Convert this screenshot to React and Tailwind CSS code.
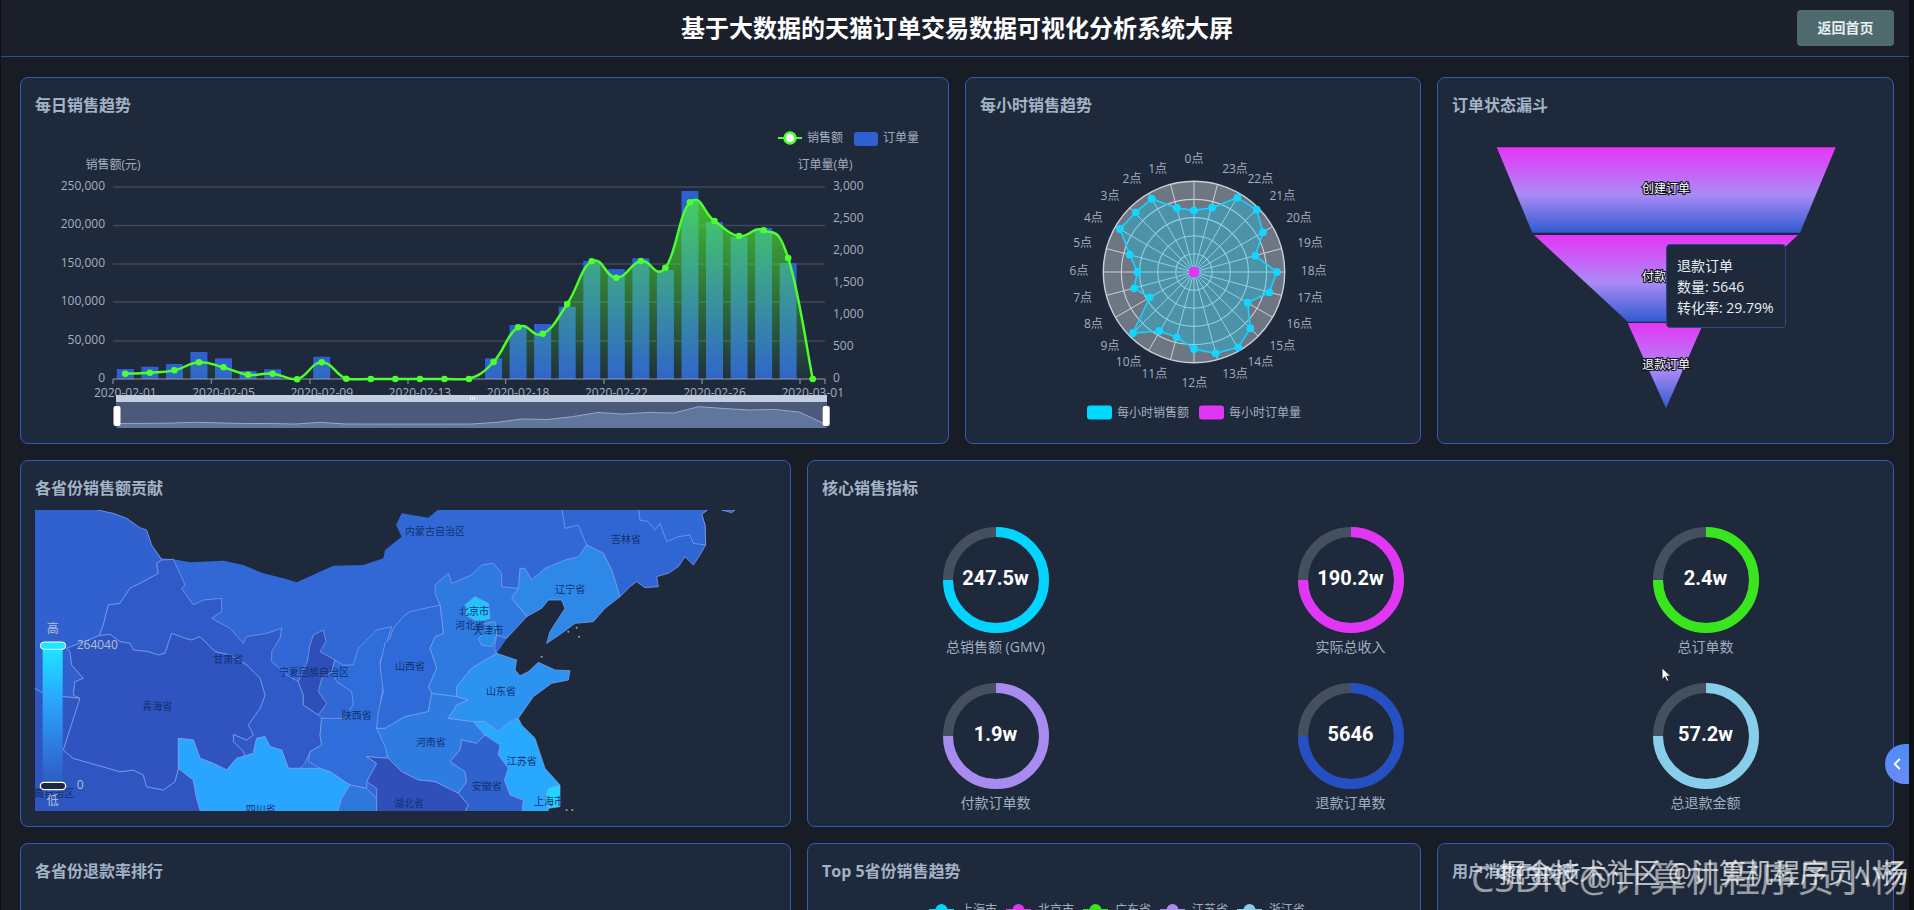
import React from "react";
import { ChevronLeft } from "lucide-react";

// daily chart numbers, read off the picture as pixel heights above the axis
const BASE_Y = 379;
const barHeights = [10, 12.3, 15, 27, 20.7, 8, 9.7, 0, 22.3, 0, 0, 0, 0, 0, 0, 20.7, 54, 55, 72.3, 118, 110, 120.7, 109, 188, 157, 142, 151, 116, 0];
const lineY = [373.7, 372.7, 370.3, 362.3, 367.3, 374.7, 373.7, 379.3, 362.3, 378.7, 379, 379, 379, 379, 379, 362, 327.3, 333.7, 304, 261.3, 277.7, 261, 267.7, 202.3, 221, 236, 230.3, 258, 379];
const dayX = (i) => 125.3 + i * 24.55;

const smoothPath = (pts) => {
  let d = `M${pts[0][0]} ${pts[0][1]}`;
  for (let i = 0; i < pts.length - 1; i++) {
    const p0 = pts[Math.max(i - 1, 0)];
    const p1 = pts[i];
    const p2 = pts[i + 1];
    const p3 = pts[Math.min(i + 2, pts.length - 1)];
    const t = 0.22;
    d += ` C${p1[0] + (p2[0] - p0[0]) * t} ${Math.min(p1[1] + (p2[1] - p0[1]) * t, 380)} ${p2[0] - (p3[0] - p1[0]) * t} ${Math.min(p2[1] - (p3[1] - p1[1]) * t, 380)} ${p2[0]} ${p2[1]}`;
  }
  return d;
};

function SalesChart() {
  const pts = lineY.map((y, i) => [dayX(i), y]);
  const line = smoothPath(pts);
  const mini = lineY.map((y, i) => [118 + (i * 707) / 28, 424 - (BASE_Y - y) * 0.098]);
  const miniLine = mini.map((p, i) => `${i ? "L" : "M"}${p[0]} ${p[1]}`).join(" ");
  const leftLabels = ["250,000", "200,000", "150,000", "100,000", "50,000", "0"];
  const rightLabels = ["3,000", "2,500", "2,000", "1,500", "1,000", "500", "0"];
  const gridY = [187, 225.5, 264, 302, 341];
  const dates = ["2020-02-01", "2020-02-05", "2020-02-09", "2020-02-13", "2020-02-18", "2020-02-22", "2020-02-26", "2020-03-01"];
  const ticks = [113, 211.3, 310, 408, 505.7, 604, 702, 800, 825];
  return (
    <svg viewBox="35 127 898 301" className="block h-[301px] w-full" fontSize="12" fill="#a3afc0">
      <defs>
        <linearGradient id="salesArea" gradientUnits="userSpaceOnUse" x1="0" y1="202" x2="0" y2="379">
          <stop offset="0" stopColor="#4fff30" stopOpacity="0.68" />
          <stop offset="1" stopColor="#4fff30" stopOpacity="0.04" />
        </linearGradient>
      </defs>
      <line x1="778" x2="802" y1="138" y2="138" stroke="#4dff2e" strokeWidth="2" />
      <circle cx="790" cy="138" r="5.5" fill="#fff" stroke="#4dff2e" strokeWidth="2.5" />
      <text x="807" y="142">销售额</text>
      <rect x="854" y="132" width="24" height="14" rx="3" fill="#2f5fd0" />
      <text x="883" y="142">订单量</text>
      <text x="113" y="169" textAnchor="middle">销售额(元)</text>
      <text x="825" y="169" textAnchor="middle">订单量(单)</text>
      {gridY.map((y) => (
        <line key={y} x1="113" x2="825" y1={y} y2={y} stroke="#3f4859" strokeWidth="1.3" />
      ))}
      {leftLabels.map((t, i) => (
        <text key={t} x="105" y={190 + i * 38.4} textAnchor="end">{t}</text>
      ))}
      {rightLabels.map((t, i) => (
        <text key={t} x="833" y={190 + i * 32} >{t}</text>
      ))}
      {barHeights.map((h, i) => (
        <rect key={i} x={dayX(i) - 8.5} y={BASE_Y - h} width="17" height={h} fill="#2f5fd0" />
      ))}
      <path d={`${line} L${dayX(28)} ${BASE_Y} L${dayX(0)} ${BASE_Y} Z`} fill="url(#salesArea)" />
      <line x1="113" x2="825" y1="379" y2="379" stroke="#929cab" strokeWidth="1.2" />
      {ticks.map((x) => (
        <line key={x} x1={x} x2={x} y1="379" y2="384" stroke="#929cab" strokeWidth="1" />
      ))}
      {dates.map((d, i) => (
        <text key={d} x={dayX(i * 4)} y="396.5" textAnchor="middle">{d}</text>
      ))}
      <path d={line} fill="none" stroke="#4dff2e" strokeWidth="2.4" />
      {pts.map((p, i) => (
        <circle key={i} cx={p[0]} cy={p[1]} r="3.3" fill="#4dff2e" />
      ))}
      <rect x="116" y="395" width="711" height="7" fill="#c3cfe0" />
      <rect x="116" y="402" width="711" height="26" fill="#4a5a78" />
      <path d={`${miniLine} L825 428 L118 428 Z`} fill="#62769c" />
      <path d={miniLine} fill="none" stroke="#92a8cc" strokeWidth="1" />
      <path d="M470.5 396.5v3.5M472.5 396.5v3.5M474.5 396.5v3.5" stroke="#fff" strokeWidth="0.8" />
      <rect x="113.5" y="406" width="7" height="20" rx="2" fill="#fff" />
      <rect x="822.7" y="406" width="7" height="20" rx="2" fill="#fff" />
    </svg>
  );
}

// radar points and label centres in page coordinates
const radarZoom = [[402, 211], [351, 204], [275, 176], [227, 217], [180, 267], [209, 344], [232, 396], [222, 445], [269, 472], [219, 579], [298, 573], [350, 592], [402, 627], [467, 640], [535, 622], [571, 565], [563, 488], [628, 457], [651, 396], [586, 347], [609, 277], [590, 209], [532, 173], [456, 203]];
const radarLabels = [[402, 57], [293, 88], [216, 118], [150, 168], [100, 235], [68, 310], [57, 394], [68, 475], [100, 551], [150, 617], [206, 667], [283, 701], [403, 730], [525, 701], [601, 667], [667, 617], [718, 551], [750, 475], [761, 394], [750, 310], [717, 235], [667, 168], [601, 118], [525, 88]];
const toPage = ([x, y]) => [1060 + x / 3, 140 + y / 3];

function HourRadar() {
  const cx = 1194;
  const cy = 272;
  const pts = radarZoom.map(toPage);
  return (
    <svg viewBox="980 127 425 301" className="block h-[301px] w-full" fontSize="12" fill="#a3afc0">
      <circle cx={cx} cy={cy} r="90.7" fill="#6e7683" />
      {[18.2, 36.3, 54.4, 72.6, 90.7].map((r, i) => (
        <circle key={r} cx={cx} cy={cy} r={r} fill="none" stroke="#c8d0da" strokeWidth={i === 4 ? 1.4 : 1.1} />
      ))}
      {Array.from({ length: 24 }, (_, i) => {
        const a = (i * Math.PI) / 12;
        return <line key={i} x1={cx} y1={cy} x2={cx + Math.sin(a) * 90.7} y2={cy - Math.cos(a) * 90.7} stroke="#c8d0da" strokeWidth="1" />;
      })}
      <polygon points={pts.map((p) => p.join(",")).join(" ")} fill="#00d4ff" fillOpacity="0.3" stroke="#19d3ff" strokeWidth="1.6" />
      {pts.map((p, i) => (
        <circle key={i} cx={p[0]} cy={p[1]} r="3.9" fill="#12d6ff" />
      ))}
      <circle cx={cx} cy={cy} r="5.5" fill="#e136f5" />
      {radarLabels.map((l, i) => {
        const p = toPage(l);
        return <text key={i} x={p[0]} y={p[1] + 4} textAnchor="middle">{i}点</text>;
      })}
      <rect x="1087" y="405.5" width="25" height="14" rx="3" fill="#00d9ff" />
      <text x="1117" y="416.5">每小时销售额</text>
      <rect x="1199" y="405.5" width="25" height="14" rx="3" fill="#e136f5" />
      <text x="1229" y="416.5">每小时订单量</text>
    </svg>
  );
}

function OrderFunnel() {
  const labelProps = { textAnchor: "middle", fontSize: 12, fill: "#fff", stroke: "#0d1220", strokeWidth: 2.2, paintOrder: "stroke" };
  return (
    <svg viewBox="1452 127 426 301" className="block h-[301px] w-full">
      <defs>
        <linearGradient id="funnelFill" x1="0" y1="0" x2="0" y2="1">
          <stop offset="0" stopColor="#e535f7" />
          <stop offset="0.55" stopColor="#ab8af6" />
          <stop offset="1" stopColor="#2f5bcf" />
        </linearGradient>
      </defs>
      <polygon points="1496.7,147.3 1835.7,147.3 1800,232.7 1532.3,232.7" fill="url(#funnelFill)" />
      <polygon points="1534,235 1798,235 1704,321.7 1627.7,321.7" fill="url(#funnelFill)" />
      <polygon points="1627.7,323 1703.5,323 1666,408.3" fill="url(#funnelFill)" />
      <text x="1666" y="193" {...labelProps}>创建订单</text>
      <text x="1666" y="281" {...labelProps}>付款订单</text>
      <text x="1666" y="369" {...labelProps}>退款订单</text>
    </svg>
  );
}

const land = "5,5 155,5 250,25 290,40 330,68 350,75 365,120 395,160 430,163 480,172 580,167 640,180 700,205 760,220 800,232 860,205 910,182 1000,180 1060,160 1065,135 1115,95 1098,60 1115,25 1195,38 1235,5 1700,5 1700,125 1500,300 1400,445 1320,650 1300,930 5,930";
const provinces = [
  ["#3061cf", "5,5 155,5 250,25 290,40 330,68 350,75 365,120 395,165 380,175 385,205 340,230 300,250 270,295 235,300 220,360 208,392 110,430 120,440 125,480 160,520 135,530 130,570 150,580 100,575 40,565 5,545"],
  ["#2f55c1", "5,545 40,565 100,575 150,580 100,735 130,760 200,780 270,800 310,795 340,810 350,845 400,855 435,830 445,790 490,825 500,880 515,930 5,930"],
  ["#2f5ac8", "430,163 395,165 380,175 385,205 340,230 300,250 270,295 235,300 220,360 208,392 240,388 270,410 300,415 310,435 355,440 385,450 405,445 425,385 465,400 485,405 510,395 555,440 600,450 650,480 690,520 705,570 690,610 655,660 670,690 650,705 610,688 610,710 640,740 645,755 670,745 680,700 705,695 720,725 755,735 775,790 810,790 825,775 840,740 875,720 870,690 875,640 865,630 820,600 820,570 805,530 770,510 725,470 725,440 750,400 755,370 710,385 650,395 640,415 600,370 545,340 575,320 575,280 520,285 490,300 455,250 465,240"],
  ["#2f53bf", "208,392 240,388 270,410 300,415 310,435 355,440 385,450 405,445 425,385 465,400 485,405 510,395 555,440 600,450 650,480 690,520 705,570 690,610 655,660 670,690 650,705 610,688 610,710 640,740 645,755 620,760 590,795 550,775 510,760 490,705 445,700 445,790 435,830 400,855 350,845 340,810 310,795 270,800 200,780 130,760 100,735 150,580 130,570 135,530 160,520 125,480 120,440 110,430"],
  ["#2e4fb7", "840,420 850,390 880,375 888,410 870,440 915,465 905,500 875,520 865,560 890,595 865,630 820,600 820,570 805,530 832,470"],
  ["#2f6dda", "915,465 940,480 970,480 985,430 1040,375 1085,365 1065,430 1050,470 1060,540 1040,670 1080,740 1065,760 1010,755 1040,775 1010,830 1010,850 960,840 900,800 870,790 835,770 840,740 875,720 870,690 875,640 940,640 970,600 965,560 920,530 905,500"],
  ["#29a4ff", "445,700 490,705 510,760 550,775 590,795 620,760 670,745 680,700 705,695 720,725 755,735 775,790 810,790 870,790 900,800 960,840 935,880 920,930 515,930 500,880 490,825 445,790 445,740"],
  ["#2e78dc", "960,840 1010,850 1040,880 1040,930 920,930 935,880"],
];
const eastProvinces = [
  ["#2f66d4", "530,5 540,70 580,60 605,120 655,145 680,195 705,275 735,245 755,230 780,248 820,245 815,215 850,205 880,185 900,155 925,180 945,150 962,120 960,60 950,28 980,5"],
  ["#3068d6", "760,5 765,45 790,50 810,75 825,55 845,110 880,95 915,90 925,115 962,120 960,60 950,28 980,5"],
  ["#2e88e8", "605,120 655,145 680,195 705,275 660,310 625,350 570,355 530,385 485,415 495,380 540,310 530,285 490,285 470,310 425,335 415,320 380,280 400,250 405,190 420,190 440,225 480,190 540,165 580,155"],
  ["#2f7ae0", "150,240 190,205 200,235 260,210 290,180 325,175 350,205 350,245 400,250 380,280 425,335 365,400 335,390 328,430 335,445 260,490 215,545 215,575 140,565 130,545 155,490 135,430 150,395 175,385 165,300 150,265"],
  ["#22c4ff", "270,275 310,295 315,340 280,350 240,330 240,300"],
  ["#2a8de8", "300,355 330,350 335,390 320,425 290,420 280,400 300,385"],
  ["#2e6bd8", "165,300 175,385 150,395 135,430 155,490 130,545 140,565 130,620 60,635 0,670 -25,670 -20,620 -5,560 -15,480 0,415 15,400 25,370 60,330 75,320 120,310"],
  ["#2e7ce2", "-25,670 0,670 60,635 130,620 140,565 215,575 250,585 215,600 190,640 265,650 300,690 275,715 230,705 225,735 195,770 240,800 245,830 220,865 150,830 100,825 50,800 10,760 0,725"],
  ["#2c93f0", "335,445 395,465 390,495 405,512 430,500 460,472 510,495 555,497 550,525 500,535 445,575 400,640 375,650 340,680 300,650 265,650 190,640 215,600 250,585 215,575 215,545 260,490"],
  ["#28a8ff", "265,650 300,650 340,680 375,650 400,640 410,660 450,700 480,790 525,840 490,850 490,930 410,930 415,885 375,870 358,825 370,790 340,750 345,720 300,690"],
  ["#1fd6ff", "490,850 525,840 525,905 490,910 480,880"],
  ["#2f62cc", "275,715 300,690 345,720 340,750 370,790 358,825 375,870 415,885 410,930 235,930 250,900 220,865 245,830 240,800 195,770 225,735 230,705"],
  ["#304fbb", "10,760 50,800 100,825 150,830 220,865 250,900 235,930 -25,930 -25,850 -55,830 -25,775 -55,755"],
  ["#2f66d4", "1010,15 1050,15 1040,23"],
];
const islands = [[550, 380], [575, 368], [582, 395], [470, 455], [545, 915], [562, 915]];
const westLabels = [["甘肃省", 595, 463], ["青海省", 382, 603], ["宁夏回族自治区", 852, 503], ["陕西省", 980, 630], ["四川省", 692, 912], ["西藏自治区", 58, 865]];
const eastLabels = [["内蒙古自治区", 150, 78], ["吉林省", 723, 103], ["辽宁省", 556, 252], ["北京市", 267, 320], ["河北省", 255, 360], ["天津市", 310, 377], ["山西省", 75, 483], ["山东省", 348, 560], ["河南省", 137, 712], ["江苏省", 410, 770], ["安徽省", 305, 843], ["湖北省", 72, 895], ["上海市", 492, 888]];

function ProvinceMap() {
  return (
    <svg viewBox="15 15 2160 903" className="block h-[301px] w-[720px]">
      <defs>
        <linearGradient id="legendBar" x1="0" y1="0" x2="0" y2="1">
          <stop offset="0" stopColor="#1ee8ff" />
          <stop offset="0.4" stopColor="#29a6ff" />
          <stop offset="1" stopColor="#2f5cc4" />
        </linearGradient>
      </defs>
      <polygon points={land} fill="#3268d6" />
      <g stroke="#7fa2ea" strokeWidth="2.2" strokeLinejoin="round">
        {provinces.map(([fill, points], i) => (
          <polygon key={i} points={points} fill={fill} />
        ))}
        <g transform="translate(1065 0)">
          {eastProvinces.map(([fill, points], i) => (
            <polygon key={i} points={points} fill={fill} />
          ))}
        </g>
      </g>
      <g transform="translate(1065 0)" fill="#b79f86">
        {islands.map(([x, y]) => (
          <circle key={x} cx={x} cy={y} r="3" />
        ))}
      </g>
      <g fontSize="30" fill="#12306e" textAnchor="middle">
        {westLabels.map(([t, x, y]) => (
          <text key={t} x={x} y={y + 11}>{t}</text>
        ))}
        <g transform="translate(1065 0)">
          {eastLabels.map(([t, x, y]) => (
            <text key={t} x={x} y={y + 11}>{t}</text>
          ))}
        </g>
      </g>
      <rect x="38" y="420" width="60" height="410" fill="url(#legendBar)" />
      <rect x="31" y="411" width="76" height="22" rx="11" fill="#1ee8ff" stroke="#fff" strokeWidth="3" />
      <rect x="31" y="832" width="76" height="22" rx="11" fill="#1e293b" stroke="#fff" strokeWidth="4" />
      <g fontSize="36" fill="#b3c0d4">
        <text x="68" y="383" textAnchor="middle">高</text>
        <text x="68" y="900" textAnchor="middle">低</text>
        <text x="140" y="433">264040</text>
        <text x="140" y="853">0</text>
      </g>
    </svg>
  );
}

const metrics = [
  { value: "247.5w", label: "总销售额 (GMV)", color: "#00d4ff" },
  { value: "190.2w", label: "实际总收入", color: "#e136f5" },
  { value: "2.4w", label: "总订单数", color: "#39e61e" },
  { value: "1.9w", label: "付款订单数", color: "#a78bf0" },
  { value: "5646", label: "退款订单数", color: "#2450c4" },
  { value: "57.2w", label: "总退款金额", color: "#87ceeb" },
];

function Metric({ value, label, color }) {
  return (
    <div className="flex flex-col items-center">
      <div className="relative h-[106px] w-[106px]">
        <svg viewBox="0 0 106 106" className="block h-[106px] w-[106px] -rotate-90">
          <circle cx="53" cy="53" r="48" fill="none" stroke="#444f5f" strokeWidth="10" />
          <circle cx="53" cy="53" r="48" fill="none" stroke={color} strokeWidth="10" pathLength="100" strokeDasharray="75 25" />
        </svg>
        <div className="absolute inset-0 flex items-center justify-center pb-1 font-['Roboto',sans-serif] text-xl font-bold text-white">{value}</div>
      </div>
      <div className="mt-1 text-sm leading-5 text-[#9fb0c3]">{label}</div>
    </div>
  );
}

const topProvinces = [
  { name: "上海市", color: "#00d4ff" },
  { name: "北京市", color: "#e136f5" },
  { name: "广东省", color: "#39e61e" },
  { name: "江苏省", color: "#a78bf0" },
  { name: "浙江省", color: "#87ceeb" },
];

function Card({ title, className = "", children }) {
  return (
    <div className={`relative h-[367px] rounded-lg border border-[#2f5bb7] bg-[#1e293b] py-[15px] pr-[15px] pl-[14px] ${className}`}>
      <h2 className="mb-2.5 text-base leading-6 font-bold text-[#a3b3c6]">{title}</h2>
      {children}
    </div>
  );
}

export default function App() {
  return (
    <div className="flex h-[910px] w-[1914px] overflow-hidden bg-[#0e1014] font-['Open_Sans','Noto_Sans_CJK_SC',sans-serif]">
      <div className="relative ml-px h-full w-[1908px] bg-[#181d25]">
        <header className="grid h-[57px] grid-cols-[1fr_auto_1fr] items-center border-b border-[#2b4d9c] bg-[#1a1f2a] pr-[15px] pl-[19px]">
          <div />
          <h1 className="text-2xl font-bold text-white">基于大数据的天猫订单交易数据可视化分析系统大屏</h1>
          <button className="h-9 w-[97px] justify-self-end rounded bg-[#4e6a6e] text-sm font-semibold text-[#e8eef0]">返回首页</button>
        </header>

        <main className="flex flex-col gap-4 pt-5 pl-[19px]">
          <div className="grid grid-cols-[929px_456px_457px] gap-4">
            <Card title="每日销售趋势"><SalesChart /></Card>
            <Card title="每小时销售趋势"><HourRadar /></Card>
            <Card title="订单状态漏斗">
              <OrderFunnel />
              <div className="absolute top-[166px] left-[228px] h-[84px] w-[120px] rounded border border-[#2b4a8a] bg-[#1e293b] px-[10px] pt-[10px] text-sm leading-[21px] whitespace-nowrap text-[#e8edf3]">
                <p>退款订单</p>
                <p>数量: 5646</p>
                <p>转化率: 29.79%</p>
              </div>
            </Card>
          </div>

          <div className="grid grid-cols-[771px_1087px] gap-4">
            <Card title="各省份销售额贡献"><ProvinceMap /></Card>
            <Card title="核心销售指标">
              <div className="grid grid-cols-3 gap-x-[22px] gap-y-[26px] pt-[17px] pr-[6px] pl-[7px]">
                {metrics.map((m) => (
                  <Metric key={m.label} {...m} />
                ))}
              </div>
            </Card>
          </div>

          <div className="grid grid-cols-[771px_614px_457px] gap-4">
            <Card title="各省份退款率排行" />
            <Card title="Top 5省份销售趋势">
              <div className="flex pt-[9px] pl-[107px]">
                {topProvinces.map((p) => (
                  <div key={p.name} className="mr-[7px] flex w-[70px] items-center gap-[7px] text-xs leading-4 text-[#a3afc0]">
                    <svg viewBox="0 0 25 14" className="h-3.5 w-[25px] shrink-0">
                      <line x1="0" x2="25" y1="7" y2="7" stroke={p.color} strokeWidth="2" />
                      <circle cx="12.5" cy="7" r="6" fill={p.color} />
                    </svg>
                    {p.name}
                  </div>
                ))}
              </div>
            </Card>
            <Card title="用户消费行为分析" />
          </div>
        </main>

        <div className="absolute top-[744px] right-0 flex h-10 w-6 items-center justify-center rounded-l-full bg-gradient-to-b from-[#4a8cf5] to-[#6a8cf8] text-white">
          <ChevronLeft size={18} strokeWidth={2.5} />
        </div>

        <svg viewBox="0 0 12 18" className="absolute top-[667px] left-[1660px] h-4 w-[11px]">
          <path d="M1 1v13l3.2-3 2.2 5 2-.9-2.1-4.9H10.500Z" fill="#fff" stroke="#111" strokeWidth="0.8" />
        </svg>

        <div className="pointer-events-none absolute top-[855px] right-[1px] text-[37px] leading-[46px] whitespace-nowrap text-white/55">CSDN @计算机程序员小杨</div>
        <div className="pointer-events-none absolute top-[854px] right-[1px] text-[27px] leading-[38px] whitespace-nowrap text-white/70">掘金技术社区 @计算机程序员小杨</div>
      </div>
    </div>
  );
}
